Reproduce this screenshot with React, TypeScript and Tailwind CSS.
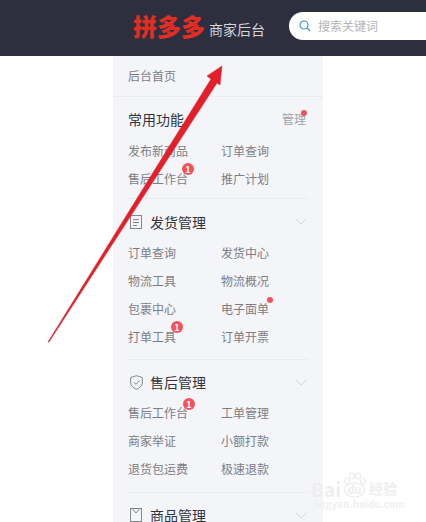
import React from "react";

const font = { fontFamily: '"Noto Sans CJK SC", sans-serif' };

function Badge({ className }: { className: string }) {
  return (
    <span className={`absolute flex h-3 w-3 items-center justify-center rounded-full bg-[#f4525a] text-[9px] font-bold leading-none text-white ${className}`}>
      1
    </span>
  );
}
function Dot({ className }: { className: string }) {
  return <span className={`absolute h-[6px] w-[6px] rounded-full bg-[#f4525a] ${className}`} />;
}

type Item = { t: string; badge?: string; dot?: string };

function Grid({ items }: { items: Item[] }) {
  return (
    <div className="grid grid-cols-[93px_1fr] text-xs leading-[28px] text-[#7c7e85]">
      {items.map((i) => (
        <div key={i.t} className="relative h-7 w-fit">
          {i.t}
          {i.badge && <Badge className={i.badge} />}
          {i.dot && <Dot className={i.dot} />}
        </div>
      ))}
    </div>
  );
}

function Chevron() {
  return (
    <svg width="12" height="7" viewBox="0 0 12 7" fill="none" stroke="#d3d5da" strokeWidth="1" className="ml-auto mr-[1px]">
      <path d="M0.5 0.5 L6 6 L11.5 0.5" />
    </svg>
  );
}

function Section({
  icon,
  title,
  items,
  last,
  tall,
}: {
  icon: React.ReactNode;
  title: string;
  items: Item[];
  last?: boolean;
  tall?: boolean;
}) {
  return (
    <div className={`mx-[15px] ${tall ? "pb-[8px]" : "pb-[9px]"} ${last ? "" : "border-b border-[#ebecf0]"}`}>
      <div className={`flex items-center pt-[5px] ${tall ? "h-[40px]" : "h-[39px]"}`}>
        <span className="mr-[6px] flex w-4 justify-center">{icon}</span>
        <span className="text-sm leading-none text-[#33343b]">{title}</span>
        <Chevron />
      </div>
      <Grid items={items} />
    </div>
  );
}

export default function App() {
  return (
    <div className="relative h-[522px] w-[426px] overflow-hidden bg-white" style={font}>
      <header className="flex h-14 items-start bg-[#2e2f3e] pt-3">
        <div className="ml-[133px] flex h-[27px] w-[132px] items-end">
          <span className="text-[24px] font-black leading-[27px] text-[#e02e24]">拼多多</span>
          <span className="ml-[4px] text-sm leading-[20px] text-[#d5d6da]">商家后台</span>
        </div>
        <div className="ml-[24px] flex h-7 flex-1 items-center rounded-l-full bg-white pl-[10px]">
          <svg width="12" height="12" viewBox="0 0 12 12" fill="none" stroke="#3a94d6" strokeWidth="1.2">
            <circle cx="5" cy="5" r="4" />
            <path d="M8 8 L11 11" />
          </svg>
          <span className="ml-[7px] text-xs text-[#b4b5b9]">搜索关键词</span>
        </div>
      </header>

      <aside className="ml-[113px] w-[210px] bg-[#f4f5f9]">
        <div className="h-[41px] border-b border-[#ebecf0] pl-[15px] text-xs leading-[40px] text-[#7c7e85]">后台首页</div>
        <div className="mx-[15px] h-[102px] border-b border-[#ebecf0]">
          <div className="flex h-[40px] items-center pt-[4px]">
            <span className="text-[14px] leading-none text-[#33343b]">常用功能</span>
            <span className="relative ml-auto mr-[2px] text-xs leading-none text-[#a0a1a7]">
              管理
              <Dot className="-right-[1px] -top-[3px]" />
            </span>
          </div>
          <Grid
            items={[
              { t: "发布新商品" },
              { t: "订单查询" },
              { t: "售后工作台", badge: "-right-[6px] -top-[2px]" },
              { t: "推广计划" },
            ]}
          />
        </div>
        <Section
          tall
          title="发货管理"
          icon={
            <svg width="12" height="14" viewBox="0 0 12 14" fill="none" stroke="#85878e">
              <rect x="0.5" y="0.5" width="11" height="13" />
              <path d="M3 4.5 H9 M3 7.5 H9 M3 10.5 H7" />
            </svg>
          }
          items={[
            { t: "订单查询" },
            { t: "发货中心" },
            { t: "物流工具" },
            { t: "物流概况" },
            { t: "包裹中心" },
            { t: "电子面单", dot: "-right-[4px] top-[2px]" },
            { t: "打单工具", badge: "-right-[7px] -top-[2px]" },
            { t: "订单开票" },
          ]}
        />
        <Section
          title="售后管理"
          icon={
            <svg width="13" height="15" viewBox="0 0 13 15" fill="none" stroke="#85878e">
              <path d="M6.5 0.7 L12.3 2.5 V8 C12.3 11 9.5 13 6.5 14.3 C3.5 13 0.7 11 0.7 8 V2.5 Z" />
              <path d="M3.8 7 L6 9.3 L9.5 5.5" />
            </svg>
          }
          items={[
            { t: "售后工作台", badge: "-right-[7px] -top-[1px]" },
            { t: "工单管理" },
            { t: "商家举证" },
            { t: "小额打款" },
            { t: "退货包运费" },
            { t: "极速退款" },
          ]}
        />
        <Section
          last
          title="商品管理"
          icon={
            <svg width="12" height="14" viewBox="0 0 12 14" fill="none" stroke="#85878e">
              <rect x="0.5" y="0.5" width="11" height="13" />
              <path d="M2.5 1 L6 5 L9.5 1" />
            </svg>
          }
          items={[]}
        />
      </aside>

      <svg width="426" height="522" viewBox="0 0 426 522" className="pointer-events-none absolute left-0 top-0">
        <path d="M48 342 L211 79 L207 76 L222 66 L220 85 L217 83 L49 342 Z" fill="#e31f2a" stroke="#e31f2a" strokeWidth="0.5" strokeLinejoin="round" />
      </svg>

      <div className="pointer-events-none absolute left-[311px] top-[470px] flex flex-col">
        <div className="flex h-[28px] items-end leading-none text-[#eeeeee]">
          <span className="text-[19px] font-bold">Bai</span>
          <span className="relative ml-[1px] flex h-[26px] w-[25px] items-end justify-center text-[11px] font-bold">
            <svg width="25" height="26" viewBox="0 0 25 26" fill="none" stroke="#ececec" strokeWidth="1.2" className="absolute left-0 top-0">
              <ellipse cx="12.5" cy="18" rx="10" ry="7" />
              <ellipse cx="5" cy="9" rx="2.5" ry="3" />
              <ellipse cx="10" cy="4" rx="2.5" ry="3" />
              <ellipse cx="16" cy="4" rx="2.5" ry="3" />
              <ellipse cx="21" cy="9" rx="2.5" ry="3" />
            </svg>
            <span className="mb-[3px]">du</span>
          </span>
          <span className="ml-[2px] text-sm font-bold">经验</span>
        </div>
        <span className="ml-[2px] mt-[1px] text-[10px] font-bold leading-none text-[#f0f0f0]">jingyan.baidu.com</span>
      </div>
    </div>
  );
}
